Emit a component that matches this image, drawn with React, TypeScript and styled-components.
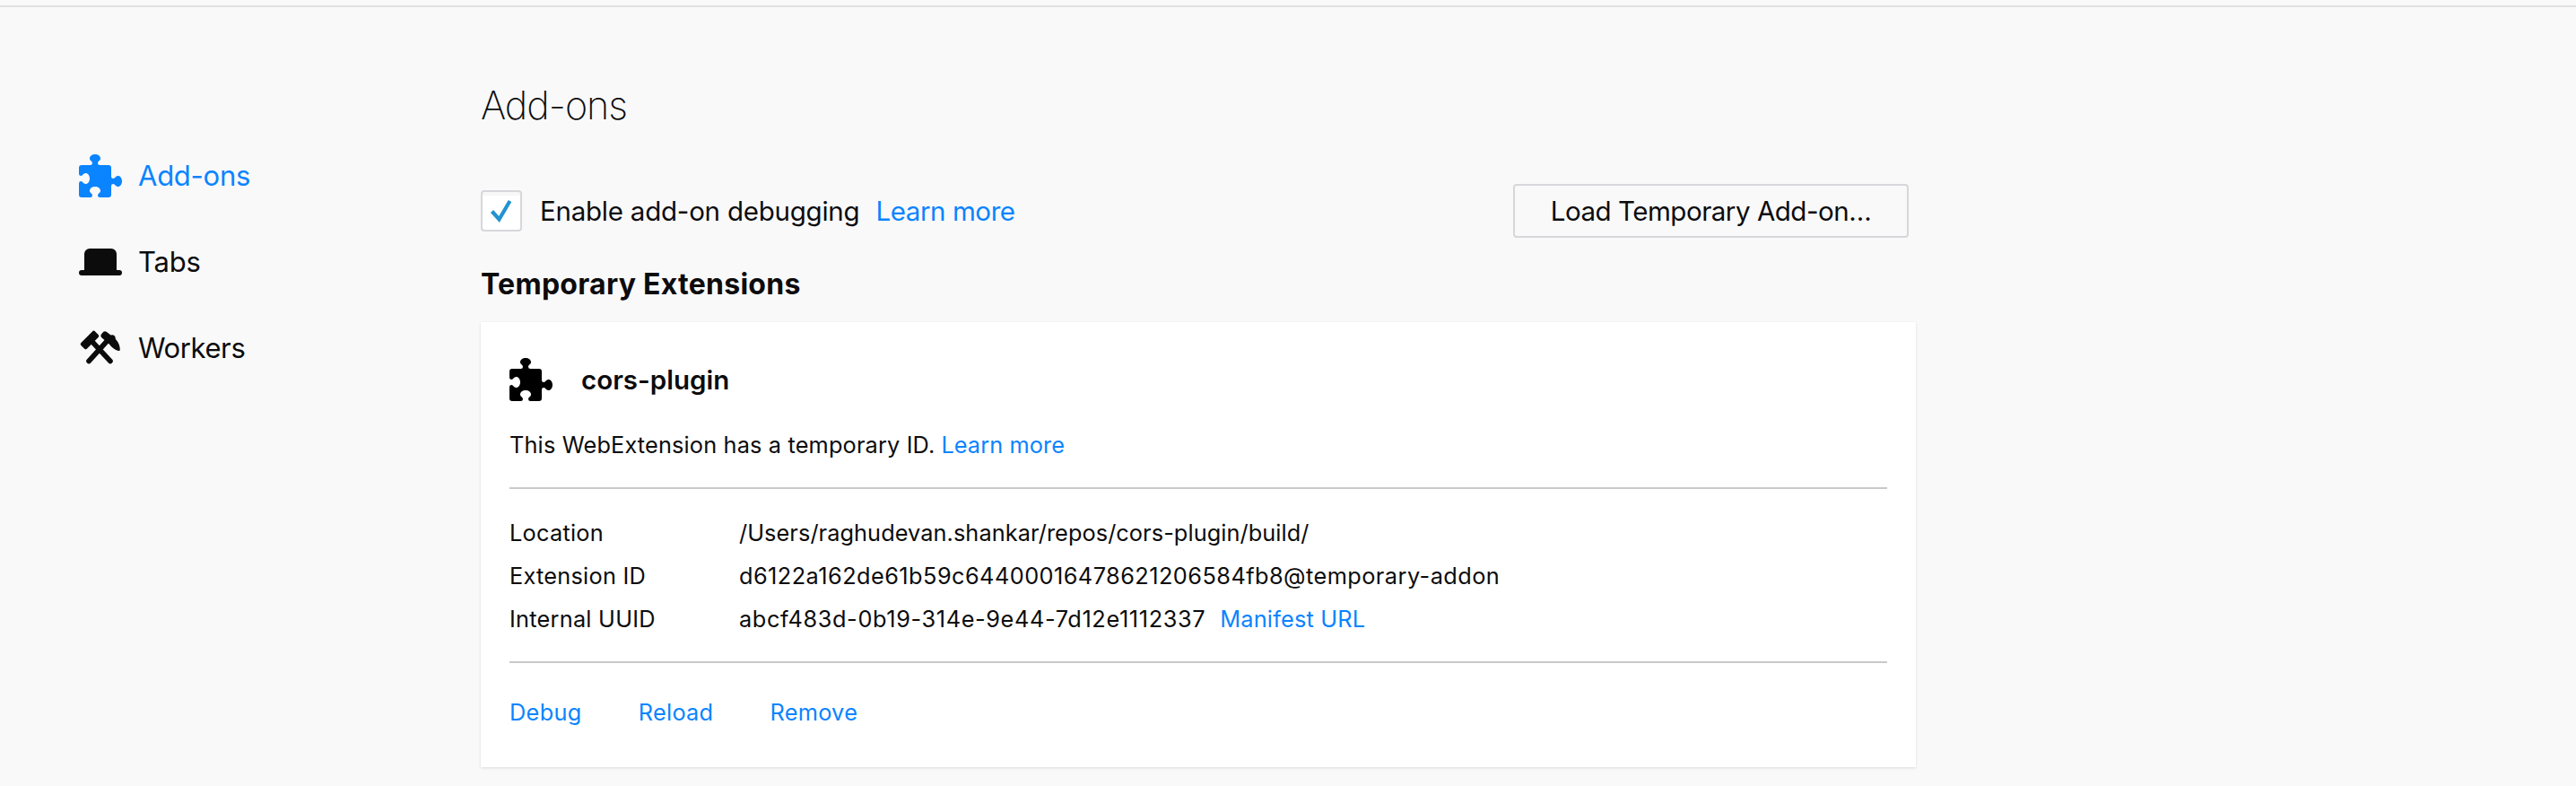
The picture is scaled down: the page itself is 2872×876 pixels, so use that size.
import React from "react";
import styled, { createGlobalStyle } from "styled-components";

const GlobalStyle = createGlobalStyle`
  * { box-sizing: border-box; }
  body {
    margin: 0;
    background: #f9f9fa;
    color: #0c0c0d;
    font-family: Inter, "Liberation Sans", sans-serif;
    overflow: hidden;
  }
`;

const Page = styled.div`
  height: 876px;
  padding-top: 6px;
  overflow: hidden;
`;

const Layout = styled.div`
  display: flex;
  height: 870px;
  border-top: 2px solid #e0e0e1;
`;

const Sidebar = styled.nav`
  flex: none;
  width: 536px;
  padding: 140px 0 0 88px;
`;

const Category = styled.a<{ $selected?: boolean; $tracking: number }>`
  display: flex;
  align-items: center;
  gap: 18px;
  height: 96px;
  font-size: 31px;
  letter-spacing: ${(p) => p.$tracking}px;
  color: ${(p) => (p.$selected ? "#0a84ff" : "#0c0c0d")};
`;

const CategoryName = styled.span`
  padding-bottom: 2px;
`;

const Icon = styled.svg`
  flex: none;
  display: block;
  width: 48px;
  height: 48px;
  fill: currentColor;
`;

const Main = styled.main`
  width: 1600px;
  padding-top: 79px;
`;

const Title = styled.h1`
  margin: 0;
  font-size: 43px;
  line-height: 60px;
  font-weight: 200;
  letter-spacing: -0.98px;
`;

const Controls = styled.div`
  display: flex;
  align-items: center;
  width: 1592px;
  height: 60px;
  margin-top: 58px;
  font-size: 29.5px;
`;

const Checkbox = styled.span`
  display: flex;
  width: 46px;
  height: 46px;
  margin-right: 20px;
  border: 2px solid #d7d7db;
  border-radius: 4px;
  background: linear-gradient(#f7f7f8 4px, #fff 4px);
`;

const CheckLabel = styled.label`
  letter-spacing: -0.23px;
  margin-right: 18px;
`;

const Link = styled.a<{ $tracking?: number }>`
  color: #0a84ff;
  letter-spacing: ${(p) => p.$tracking ?? 0}px;
`;

const LoadButton = styled.button`
  width: 441px;
  height: 60px;
  margin-left: auto;
  padding: 0;
  border: 2px solid #d7d7db;
  border-radius: 4px;
  background: transparent;
  color: inherit;
  font: inherit;
  letter-spacing: -0.47px;
`;

const SectionTitle = styled.h2`
  margin: 32px 0 22px;
  font-size: 32px;
  line-height: 40px;
  font-weight: 700;
  letter-spacing: 0.26px;
`;

const Card = styled.section`
  padding: 40px 32px 37px;
  background: #fff;
  box-shadow: 0 1px 3px rgba(12, 12, 13, 0.12);
  font-size: 25.3px;
`;

const CardHeader = styled.header`
  display: flex;
  align-items: center;
  gap: 32px;
  height: 48px;
`;

const AddonIcon = styled(Icon)`
  color: #000;
`;

const AddonName = styled.span`
  font-size: 29.5px;
  font-weight: 600;
`;

const Message = styled.p`
  display: flex;
  gap: 7px;
  margin: 29px 0 27px;
  line-height: 40px;
  letter-spacing: 0.16px;
`;

const Details = styled.dl`
  display: grid;
  grid-template-columns: 256px 1fr;
  grid-auto-rows: 48px;
  margin: 0;
  padding: 25px 0 23px;
  border: solid #c9c9c9;
  border-width: 2px 0;
  line-height: 48px;
`;

const Term = styled.dt`
  letter-spacing: 0.25px;
`;

const Value = styled.dd<{ $tracking: number }>`
  display: flex;
  gap: 16px;
  margin: 0;
  letter-spacing: ${(p) => p.$tracking}px;
`;

const Actions = styled.div`
  display: flex;
  gap: 63px;
  margin-top: 31px;
  line-height: 48px;
`;

const puzzlePath =
  "M14.5 8c-.971 0-1 1-1.75 1a.765.765 0 0 1-.75-.75V5a1 1 0 0 0-1-1H7.75A.765.765 0 0 1 7 3.25c0-.75 1-.779 1-1.75C8 .635 7.1 0 6 0S4 .635 4 1.5c0 .971 1 1 1 1.75a.765.765 0 0 1-.75.75H1a1 1 0 0 0-1 1v2.25A.765.765 0 0 0 .75 8c.75 0 .779-1 1.75-1C3.365 7 4 7.9 4 9s-.635 2-1.5 2c-.971 0-1-1-1.75-1a.765.765 0 0 0-.75.75V15a1 1 0 0 0 1 1h3.25a.765.765 0 0 0 .75-.75c0-.75-1-.779-1-1.75 0-.865.9-1.5 2-1.5s2 .635 2 1.5c0 .971-1 1-1 1.75a.765.765 0 0 0 .75.75H11a1 1 0 0 0 1-1v-3.25a.765.765 0 0 1 .75-.75c.75 0 .779 1 1.75 1 .865 0 1.5-.9 1.5-2s-.635-2-1.5-2z";

const HatIcon = () => (
  <Icon viewBox="0 0 48 48">
    <path d="M12 9h24a6 6 0 0 1 6 6v18h3a3 3 0 0 1 0 6H3a3 3 0 0 1 0-6h3V15a6 6 0 0 1 6-6z" />
  </Icon>
);

const ToolsIcon = () => (
  <Icon viewBox="0 0 48 48">
    <path d="M14.5 16.5L35 38.5M31 16.5L11 38.5" stroke="currentColor" strokeWidth="5.6" strokeLinecap="round" />
    <path
      d="M16.5 7L20 10.5L7.5 23L4 19.5z"
      stroke="currentColor"
      strokeWidth="4.5"
      strokeLinejoin="round"
    />
    <path d="M27.3 5.8Q29 4.600 31 6L35.5 9.6Q37.5 8.6 39.5 10Q41 11.5 40.8 13.8Q45.8 19.5 45.8 26Q45.5 27.3 44 26.9Q38 25.5 34 19.8L25 12Q23.7 10.3 24.8 8.7z" />
  </Icon>
);

export default function App() {
  return (
    <Page>
      <GlobalStyle />
      <Layout>
        <Sidebar>
          <Category $selected $tracking={-0.25}>
            <Icon viewBox="0 0 16 16"><path d={puzzlePath} /></Icon>
            <CategoryName>Add-ons</CategoryName>
          </Category>
          <Category $tracking={-0.21}>
            <HatIcon />
            <CategoryName>Tabs</CategoryName>
          </Category>
          <Category $tracking={-0.4}>
            <ToolsIcon />
            <CategoryName>Workers</CategoryName>
          </Category>
        </Sidebar>
        <Main>
          <Title>Add-ons</Title>
          <Controls>
            <Checkbox>
              <svg width="42" height="42" viewBox="0 0 42 42" fill="none" stroke="#2292d0" strokeWidth="4.2">
                <path d="M10.5 21.5L18.5 30.5L30.5 10" />
              </svg>
            </Checkbox>
            <CheckLabel>Enable add-on debugging</CheckLabel>
            <Link $tracking={-0.42}>Learn more</Link>
            <LoadButton>Load Temporary Add-on…</LoadButton>
          </Controls>
          <SectionTitle>Temporary Extensions</SectionTitle>
          <Card>
            <CardHeader>
              <AddonIcon viewBox="0 0 16 16"><path d={puzzlePath} /></AddonIcon>
              <AddonName>cors-plugin</AddonName>
            </CardHeader>
            <Message>
              <span>This WebExtension has a temporary ID.</span>
              <Link $tracking={0.1}>Learn more</Link>
            </Message>
            <Details>
              <Term>Location</Term>
              <Value $tracking={0.08}>/Users/raghudevan.shankar/repos/cors-plugin/build/</Value>
              <Term>Extension ID</Term>
              <Value $tracking={0.46}>d6122a162de61b59c64400016478621206584fb8@temporary-addon</Value>
              <Term>Internal UUID</Term>
              <Value $tracking={0.634}>
                <span>abcf483d-0b19-314e-9e44-7d12e1112337</span>
                <Link $tracking={0.2}>Manifest URL</Link>
              </Value>
            </Details>
            <Actions>
              <Link $tracking={0.35}>Debug</Link>
              <Link $tracking={0.3}>Reload</Link>
              <Link $tracking={0.3}>Remove</Link>
            </Actions>
          </Card>
        </Main>
      </Layout>
    </Page>
  );
}
